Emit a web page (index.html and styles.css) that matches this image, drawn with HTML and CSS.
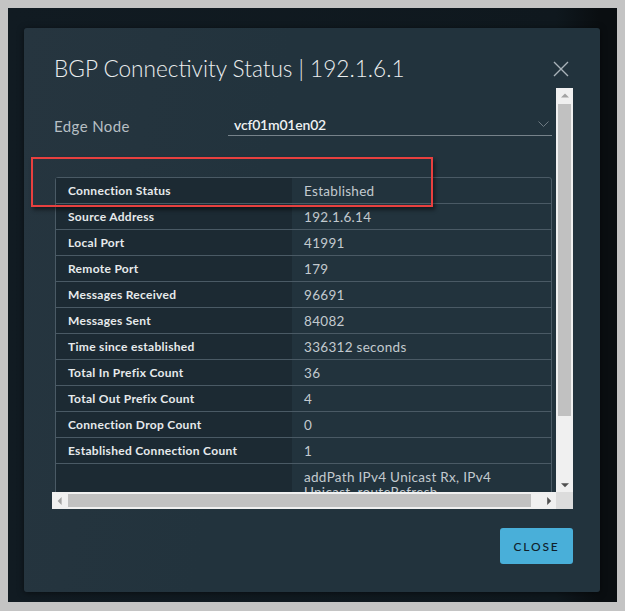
FILE: index.html
```html
<!DOCTYPE html>
<html lang="en">
<head>
    <meta charset="UTF-8">
    <title>BGP Connectivity Status</title>
    <link rel="stylesheet" href="styles.css">
</head>
<body>
    <div class="screen">
        <div class="modal">
            <div class="modal-header">
                <h3 class="modal-title">BGP Connectivity Status | 192.1.6.1</h3>
                <button class="close-x" aria-label="Close">
                    <svg width="16" height="16" viewBox="0 0 16 16"><path d="M1 1L15 15M15 1L1 15" stroke="#a9b3b9" stroke-width="1.4" fill="none"/></svg>
                </button>
            </div>

            <div class="scroll-box">
                <div class="scroll-content">
                    <div class="form-row">
                        <label for="edgeNode">Edge Node</label>
                        <div class="select" id="edgeNode">
                            <span>vcf01m01en02</span>
                            <svg width="11" height="7" viewBox="0 0 11 7"><path d="M0.5 0.5L5.5 5.5L10.5 0.5" stroke="#6e7a82" stroke-width="1" fill="none"/></svg>
                        </div>
                    </div>

                    <table class="stack-view">
                        <tr><th>Connection Status</th><td>Established</td></tr>
                        <tr><th>Source Address</th><td>192.1.6.14</td></tr>
                        <tr><th>Local Port</th><td>41991</td></tr>
                        <tr><th>Remote Port</th><td>179</td></tr>
                        <tr><th>Messages Received</th><td>96691</td></tr>
                        <tr><th>Messages Sent</th><td>84082</td></tr>
                        <tr><th>Time since established</th><td>336312 seconds</td></tr>
                        <tr><th>Total In Prefix Count</th><td>36</td></tr>
                        <tr><th>Total Out Prefix Count</th><td>4</td></tr>
                        <tr><th>Connection Drop Count</th><td>0</td></tr>
                        <tr><th>Established Connection Count</th><td>1</td></tr>
                        <tr class="multi"><th></th><td>addPath IPv4 Unicast Rx, IPv4 Unicast, routeRefresh</td></tr>
                    </table>
                </div>

                <div class="vbar">
                    <span class="arrow up"></span>
                    <span class="thumb"></span>
                    <span class="arrow down"></span>
                </div>
                <div class="hbar">
                    <span class="arrow left"></span>
                    <span class="thumb"></span>
                    <span class="arrow right"></span>
                </div>
                <div class="corner"></div>
            </div>

            <div class="modal-footer">
                <button class="btn-primary">CLOSE</button>
            </div>
        </div>

        <div class="highlight"></div>
    </div>
</body>
</html>
```

FILE: styles.css
```css
body {
    margin: 0;
    background: #c4c4c4;
    font-family: 'Lato', 'Noto Sans', sans-serif;
}
.screen {
    position: relative;
    margin: 8px 0 0 8px;
    width: 609px;
    height: 594px;
    padding: 20px 0 0 16px;
    box-sizing: border-box;
    background: linear-gradient(to right, #111b22 0%, #0f181e 90%, #0a0e11 97%);
}
.modal {
    width: 576px;
    height: 564px;
    padding: 27px 27px 0 28px;
    box-sizing: border-box;
    background: linear-gradient(100deg, #26353f 0%, #22333d 40%, #22333d 100%);
    border-radius: 3px;
    box-shadow: 0 1px 6px rgba(0, 0, 0, 0.5);
}
.modal-header {
    display: flex;
    justify-content: space-between;
    align-items: center;
    padding: 0 4px 0 2px;
    height: 28px;
    margin-bottom: 5px;
}
.modal-title {
    margin: 0;
    font-size: 22.6px;
    line-height: 28px;
    font-weight: 300;
    color: #ebeeef;
}
.close-x {
    background: none;
    border: none;
    padding: 0;
    width: 16px;
    height: 16px;
    display: flex;
}

/* scroll region with drawn scrollbars */
.scroll-box {
    display: grid;
    grid-template-columns: 504px 17px;
    grid-template-rows: 404px 17px;
    height: 421px;
}
.scroll-content {
    overflow: hidden;
    padding: 0 4px 0 2px;
}
.form-row {
    display: flex;
    align-items: center;
    margin-top: 28px;
    height: 20px;
}
.form-row label {
    width: 174px;
    font-size: 15px;
    letter-spacing: 0.4px;
    color: #b7bfc4;
}
.select {
    flex: 1;
    height: 20px;
    box-sizing: border-box;
    display: flex;
    justify-content: space-between;
    align-items: center;
    padding: 0 3px 2px 6px;
    border-bottom: 1px solid #76828a;
    font-size: 14px;
    font-weight: 600;
    letter-spacing: -0.2px;
    color: #eef1f2;
}
.stack-view {
    margin: 41px 0 0 1px;
    width: 497px;
    border-collapse: separate;
    border-spacing: 0;
    border: 1px solid #4a5a65;
    border-radius: 3px;
}
.stack-view th,
.stack-view td {
    height: 25px;
    padding: 0 12px;
    border-bottom: 1px solid #4a5a65;
    text-align: left;
    vertical-align: middle;
}
.stack-view th {
    width: 212px;
    background: #1c2a33;
    font-size: 12px;
    font-weight: 700;
    letter-spacing: 0.3px;
    color: #e7eaec;
}
.stack-view td {
    font-size: 13.5px;
    letter-spacing: 0.3px;
    color: #c3cacf;
}
.stack-view tr.multi td {
    padding: 6px 50px 8px 12px;
    line-height: 15px;
    vertical-align: top;
}

.vbar, .hbar {
    display: flex;
    background: #f0f0f0;
}
.vbar {
    flex-direction: column;
    align-items: center;
}
.vbar .thumb {
    width: 13px;
    height: 312px;
    background: #c1c1c1;
}
.vbar .arrow {
    height: 16px;
    width: 17px;
}
.vbar .down {
    margin-top: auto;
}
.hbar {
    align-items: center;
}
.hbar .thumb {
    height: 13px;
    width: 463px;
    background: #c1c1c1;
}
.hbar .arrow {
    width: 16px;
    height: 17px;
}
.hbar .right {
    margin-left: auto;
}
.corner {
    background: #dcdcdc;
}
.arrow {
    position: relative;
}
.arrow::after {
    content: '';
    position: absolute;
    left: 50%;
    top: 50%;
    width: 0;
    height: 0;
    border: 4px solid transparent;
}
.arrow.up::after {
    border-bottom-color: #a3a3a3;
    border-top-width: 0;
    transform: translate(-50%, -60%);
}
.arrow.down::after {
    border-top-color: #505050;
    border-bottom-width: 0;
    transform: translate(-50%, -20%);
}
.arrow.left::after {
    border-right-color: #a3a3a3;
    border-left-width: 0;
    transform: translate(-60%, -50%);
}
.arrow.right::after {
    border-left-color: #505050;
    border-right-width: 0;
    transform: translate(-20%, -50%);
}

.modal-footer {
    display: flex;
    justify-content: flex-end;
    margin-top: 19px;
}
.btn-primary {
    width: 73px;
    height: 36px;
    border: none;
    border-radius: 3px;
    background: #49afd9;
    color: #0f202a;
    font-family: 'Lato', sans-serif;
    font-size: 12px;
    font-weight: 500;
    letter-spacing: 1.8px;
    cursor: pointer;
}

/* annotation box drawn over the dialog */
.highlight {
    position: absolute;
    left: 23px;
    top: 149px;
    width: 402px;
    height: 50px;
    box-sizing: border-box;
    border: 2px solid #e8403f;
    box-shadow: 2px 3px 4px rgba(0, 0, 0, 0.45);
}
```
